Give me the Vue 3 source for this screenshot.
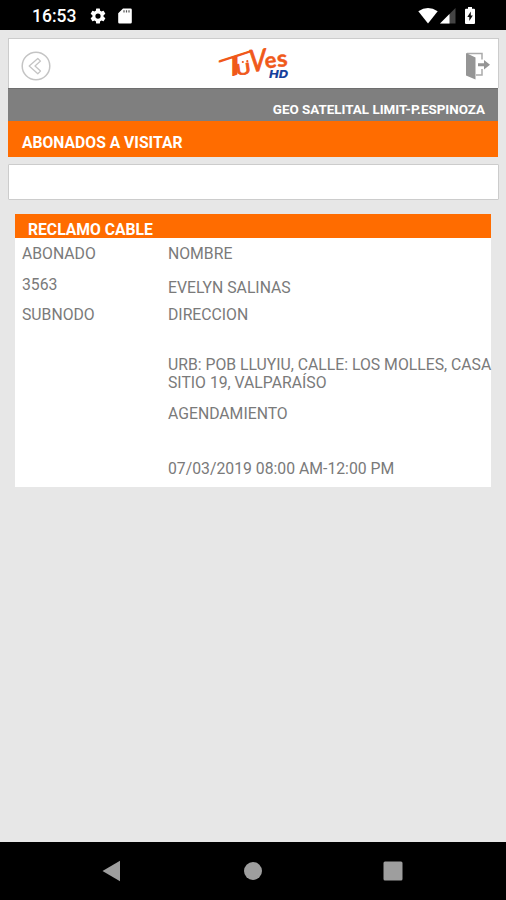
<template>
    <div class="screen">
        <div class="status-bar">
            <span class="clock">16:53</span>
            <svg class="gear-icon" width="18" height="18" viewBox="0 0 24 24">
                <path fill="#fff" fill-rule="evenodd" d="M19.4 13a7.500 7.500 0 0 0 0-2l2.100-1.650a.5.5 0 0 0 .12-.64l-2-3.460a.5.5 0 0 0-.61-.22l-2.490 1a7.300 7.300 0 0 0-1.690-.98l-.38-2.650A.5.5 0 0 0 14 2h-4a.5.5 0 0 0-.49.42l-.38 2.650c-.61.25-1.170.58-1.690.98l-2.490-1a.5.5 0 0 0-.61.22l-2 3.460a.5.5 0 0 0 .12.64L4.570 11a7.500 7.500 0 0 0 0 2l-2.110 1.650a.5.5 0 0 0-.12.64l2 3.460c.12.22.39.3.61.22l2.490-1c.52.4 1.080.73 1.690.98l.38 2.650c.03.24.24.42.49.42h4c.25 0 .46-.18.49-.42l.38-2.650c.61-.25 1.170-.58 1.690-.98l2.490 1c.22.08.49 0 .61-.22l2-3.460a.5.5 0 0 0-.12-.64L19.430 13zM12 15.500a3.500 3.500 0 1 1 0-7 3.500 3.500 0 0 1 0 7z" />
            </svg>
            <svg class="card-icon" width="14" height="16" viewBox="0 0 14 16">
                <path fill="#fff" d="M5 0.500h7.500a1.300 1.300 0 0 1 1.300 1.300v12.400a1.300 1.300 0 0 1-1.300 1.300h-11A1.300 1.300 0 0 1 .2 14.200V5.300z" />
                <path stroke="#555" stroke-width="1.200" d="M6 2.200v2.200M8.500 2.200v2.200M11 2.200v2.200" />
            </svg>
            <div class="status-right">
                <svg width="20" height="16" viewBox="0 0 20 16">
                    <path fill="#fff" d="M0.300 3.200Q10-3.200 19.700 3.200L10 15.500z" />
                </svg>
                <svg class="signal-icon" width="16" height="16" viewBox="0 0 16 16">
                    <path fill="#444" d="M15.500 0v15.500H0z" />
                    <path fill="#fff" d="M9.500 6v9.500H0z" />
                </svg>
                <svg class="battery-icon" width="10" height="17" viewBox="0 0 10 17">
                    <path fill="#fff" d="M3 0h4v1.800h2a1 1 0 0 1 1 1V16a1 1 0 0 1-1 1H1a1 1 0 0 1-1-1V2.800a1 1 0 0 1 1-1h2z" />
                    <path fill="#111" d="M5.800 4.500v4h2L4.300 14v-4h-2z" />
                </svg>
            </div>
        </div>

        <div class="content">
            <div class="top-bar">
                <svg class="back-icon" width="30" height="30" viewBox="0 0 30 30" fill="none" stroke="#c4c4c4">
                    <circle cx="15" cy="15" r="13.800" stroke-width="1.500" />
                    <path stroke-width="1.300" stroke-linejoin="round" d="M16.800 7.500L8.200 15l8.600 7.700 2.700-2.600-5.500-5.100 5.500-4.900z" />
                </svg>
                <svg class="logo" width="76" height="38" viewBox="0 0 76 38">
                    <g class="logo-letters">
                        <text class="thin" transform="matrix(2.700 -0.880 0 1.350 2.300 36)" font-size="20">T</text>
                        <text class="medium" transform="translate(19.500 31.500) rotate(-8) scale(1.200 0.900)" font-size="17">U</text>
                        <text class="medium" transform="matrix(0.900 -0.100 0 1.120 32.500 28)" font-size="27">V</text>
                        <text transform="translate(48.500 24.500) rotate(-7) scale(1.050 1.050)" font-size="21">e</text>
                        <text transform="translate(60.500 23) rotate(-5) scale(1.150 1.100)" font-size="21">s</text>
                    </g>
                    <circle cx="25.800" cy="18" r="1.100" fill="#f0591a" />
                    <circle cx="30.300" cy="17.200" r="1.100" fill="#f0591a" />
                    <text class="logo-hd" x="52" y="34" textLength="19" lengthAdjust="spacingAndGlyphs">HD</text>
                </svg>
                <svg class="exit-icon" width="26" height="30" viewBox="0 0 26 30">
                    <path fill="none" stroke="#aaa" stroke-width="1.500" d="M2 2.500h15v6M17 18v6h-6" />
                    <path fill="#959595" d="M1 2l9.500 4.500V28.500L1 24.500z" />
                    <path fill="#959595" d="M13 12.200h6V9L25 13.700l-6 4.700v-3.200h-6z" />
                </svg>
            </div>
            <div class="user-bar"><span>GEO SATELITAL LIMIT-P.ESPINOZA</span></div>
            <div class="title-bar">ABONADOS A VISITAR</div>
            <input v-model="search" class="search-box" type="text">

            <div class="claim-card">
                <div class="claim-title">{{ claim.type }}</div>
                <div class="claim-body">
                    <div class="col-left">
                        <p class="label">ABONADO</p>
                        <p class="subscriber">{{ claim.subscriber }}</p>
                        <p class="label">SUBNODO</p>
                    </div>
                    <div class="col-right">
                        <p class="label">NOMBRE</p>
                        <p class="name">{{ claim.name }}</p>
                        <p class="label">DIRECCION</p>
                        <p class="address">
                            <span v-for="line in claim.address" :key="line">{{ line }}</span>
                        </p>
                        <p class="label">AGENDAMIENTO</p>
                        <p class="schedule">{{ claim.schedule }}</p>
                    </div>
                </div>
            </div>
        </div>

        <div class="nav-bar">
            <svg width="22" height="22" viewBox="0 0 22 22"><path fill="#9e9e9e" d="M1.500 11L19 .8v20.400z" /></svg>
            <svg width="22" height="22" viewBox="0 0 22 22"><circle cx="11" cy="11" r="9" fill="#9e9e9e" /></svg>
            <svg width="22" height="22" viewBox="0 0 22 22"><rect x="1.500" y="1.500" width="19" height="19" rx="1.500" fill="#9e9e9e" /></svg>
        </div>
    </div>
</template>

<script setup>
import { ref } from 'vue'

const search = ref('')

const claim = {
    type: 'RECLAMO CABLE',
    subscriber: '3563',
    name: 'EVELYN SALINAS',
    address: ['URB: POB LLUYIU, CALLE: LOS MOLLES, CASA', 'SITIO 19, VALPARAÍSO'],
    schedule: '07/03/2019 08:00 AM-12:00 PM'
}
</script>

<style>
body {
    margin: 0;
    background: #e7e7e7;
}
</style>

<style scoped>
.screen {
    display: flex;
    flex-direction: column;
    height: 900px;
    background: #e7e7e7;
    font-family: Roboto, sans-serif;
    overflow: hidden;
}

.screen svg {
    display: block;
    flex: none;
}

.status-bar {
    display: flex;
    align-items: center;
    height: 30px;
    box-sizing: border-box;
    padding: 1px 31px 0 32px;
    background: #000;
    color: #fff;
}

.clock {
    width: 57px;
    font-size: 17.5px;
    font-weight: 500;
    line-height: 20px;
}

.card-icon {
    margin-left: 11px;
}

.status-right {
    display: flex;
    align-items: center;
    margin-left: auto;
}

.signal-icon {
    margin-left: 2px;
}

.battery-icon {
    margin-left: 9px;
}

.content {
    flex: 1;
    padding: 8px 7px 0 8px;
}

.top-bar {
    display: flex;
    align-items: center;
    justify-content: space-between;
    height: 50px;
    box-sizing: border-box;
    padding: 4px 7px 0 12px;
    border: 1px solid #ccc;
    border-bottom: none;
    background: #fff;
}

.screen .logo {
    margin: -5px 0 0 -7px;
    overflow: visible;
}

.logo-letters {
    fill: #f0591a;
    stroke: #f0591a;
    stroke-width: 0.4;
    stroke-linejoin: round;
    font-family: Lato, sans-serif;
    font-weight: 700;
}

.logo-letters .thin {
    font-weight: 300;
    stroke-width: 0.9;
}

.logo-letters .medium {
    font-weight: 500;
    stroke-width: 0.8;
}

.logo-hd {
    fill: #173f9c;
    font-family: Inter, sans-serif;
    font-size: 11px;
    font-style: italic;
    font-weight: 800;
}

.user-bar {
    height: 33px;
    box-sizing: border-box;
    padding: 13px 13px 0 0;
    border-top: 1px solid #6e6e6e;
    margin-right: 1px;
    background: #7f7f7f;
    color: #fff;
    font-size: 13.4px;
    font-weight: 700;
    line-height: 16px;
    text-align: right;
}

.title-bar {
    height: 36px;
    box-sizing: border-box;
    padding: 12px 14px 0;
    margin-right: 1px;
    background: #ff6c00;
    color: #fff;
    font-size: 15.7px;
    font-weight: 700;
    line-height: 20px;
}

.search-box {
    display: block;
    width: 100%;
    height: 36px;
    box-sizing: border-box;
    margin-top: 7px;
    padding: 0 12px;
    border: 1px solid #ccc;
    border-radius: 1px;
    outline: none;
    background: #fff;
    font: 16px Roboto, sans-serif;
}

.claim-card {
    height: 273px;
    margin: 14px 8px 0 7px;
    background: #fff;
}

.claim-title {
    height: 24px;
    box-sizing: border-box;
    padding: 6px 13px 0;
    background: #ff6c00;
    color: #fff;
    font-size: 15.7px;
    font-weight: 700;
    line-height: 20px;
}

.claim-body {
    display: grid;
    grid-template-columns: 146px 1fr;
    padding: 6px 0 0 7px;
    color: #7a7a7a;
    font-size: 15.77px;
    line-height: 19px;
    white-space: nowrap;
}

.claim-body p {
    margin: 0;
}

.claim-body .subscriber {
    margin: 12px 0 11px;
}

.claim-body .name {
    margin: 15px 0 8px;
}

.claim-body .address {
    margin: 32px 0 12px;
    line-height: 18px;
}

.address span {
    display: block;
}

.claim-body .schedule {
    margin-top: 36px;
}

.nav-bar {
    display: flex;
    align-items: center;
    justify-content: space-between;
    height: 58px;
    box-sizing: border-box;
    padding: 0 102px 0 101px;
    background: #000;
}
</style>
